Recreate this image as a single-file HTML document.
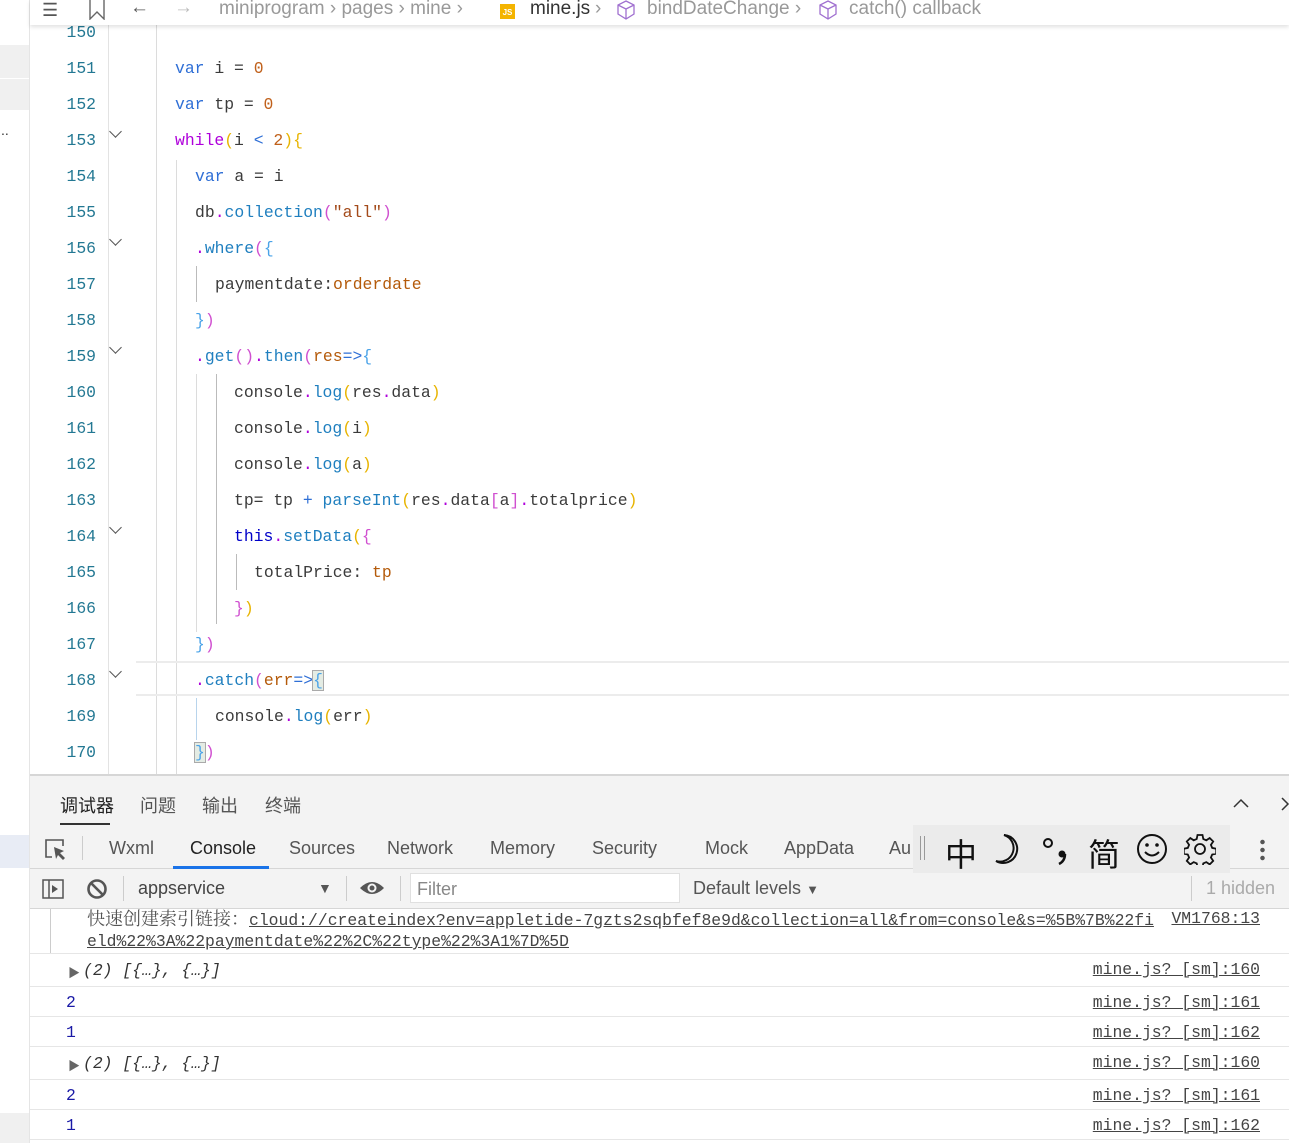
<!DOCTYPE html>
<html><head><meta charset="utf-8"><style>
*{margin:0;padding:0;box-sizing:border-box}
body{width:1289px;height:1143px;overflow:hidden;background:#fff;position:relative;font-family:"Liberation Sans","Noto Sans CJK SC",sans-serif}
.a{position:absolute}
.mono{font-family:"Liberation Mono","Noto Sans CJK SC",monospace;font-size:16.4px}
.ln{position:absolute;left:40px;width:56px;text-align:right;color:#237893;height:36px;line-height:36px}
.cl{position:absolute;height:36px;line-height:36px;white-space:pre;color:#3b3b3b}
.k{color:#2f6fd6}.n{color:#c0601a}.w{color:#af00db}.y{color:#e8b400}.p{color:#d050d0}.b{color:#4aa3e8}.f{color:#1f7fbf}.s{color:#a34a1a}.t{color:#0000c8}.v{color:#b45a0a}
.g{position:absolute;width:1px;background:#dcdcdc}
.fold{position:absolute;left:111px;width:9px;height:9px;border-right:1.5px solid #555;border-bottom:1.5px solid #555;transform:rotate(45deg)}
.tab{position:absolute;font-size:18px;color:#555}
.row{position:absolute;left:30px;right:0}
.src{position:absolute;right:29px;color:#444;text-decoration:underline}
</style></head><body>
<div class="a" style="left:0;top:0;width:30px;height:1143px;background:#fff;border-right:1px solid #e5e5e5"></div>
<div class="a" style="left:0;top:45px;width:29px;height:33px;background:#f0f0f0"></div>
<div class="a" style="left:0;top:79px;width:29px;height:31px;background:#f0f0f0"></div>
<div class="a" style="left:1px;top:122px;font-size:14px;color:#333">..</div>
<div class="a" style="left:0;top:835px;width:29px;height:33px;background:#e8ecf5"></div>
<div class="a" style="left:0;top:1113px;width:29px;height:30px;background:#f0f0f0"></div>

<div class="a" style="left:30px;top:0;width:1259px;height:25px;background:#fff;box-shadow:0 2px 4px rgba(0,0,0,.12);z-index:3;font-size:19px;color:#999;line-height:20px;white-space:nowrap">
 <span class="a" style="left:12px;top:0;color:#555;font-size:18px">☰</span>
 <svg class="a" style="left:58px;top:0" width="18" height="20"><path d="M2 0V19L9 12L16 19V0" fill="none" stroke="#666" stroke-width="1.4"/></svg>
 <span class="a" style="left:100px;top:-2px;color:#555">←</span>
 <span class="a" style="left:144px;top:-2px;color:#bbb">→</span>
 <span class="a" style="left:189px;top:-1px">miniprogram › pages › mine ›</span>
 <span class="a" style="left:470px;top:4px;width:15px;height:15px;background:#f4b400;color:#fff;font-size:8px;line-height:18px;text-align:center;font-weight:bold">JS</span>
 <span class="a" style="left:500px;top:-1px;color:#333">mine.js</span>
 <span class="a" style="left:565px;top:-1px">›</span>
 <svg class="a" style="left:586px;top:0" width="20" height="20"><path d="M10 1L18 5V14L10 19L2 14V5Z M2 5L10 9L18 5 M10 9V19" fill="none" stroke="#a070d0" stroke-width="1.3"/></svg>
 <span class="a" style="left:617px;top:-1px">bindDateChange ›</span>
 <svg class="a" style="left:788px;top:0" width="20" height="20"><path d="M10 1L18 5V14L10 19L2 14V5Z M2 5L10 9L18 5 M10 9V19" fill="none" stroke="#a070d0" stroke-width="1.3"/></svg>
 <span class="a" style="left:819px;top:-1px">catch() callback</span>
</div>

<div class="g" style="left:108px;top:25px;height:750px;background:#e3e3e3"></div>
<div class="g" style="left:156px;top:25px;height:750px"></div>
<div class="g" style="left:176px;top:160px;height:615px"></div>
<div class="g" style="left:196px;top:266px;height:36px;background:#bbb"></div>
<div class="g" style="left:196px;top:374px;height:258px"></div>
<div class="g" style="left:216px;top:374px;height:250px;background:#bbb"></div>
<div class="g" style="left:236px;top:554px;height:36px;background:#bbb"></div>
<div class="g" style="left:196px;top:698px;height:42px;background:#b8d4ec"></div>
<div class="a" style="left:136px;top:661px;width:1153px;height:35px;border-top:2px solid #ececec;border-bottom:2px solid #ececec"></div>

<div class="mono">
<div class="ln" style="top:15px">150</div>
<div class="ln" style="top:51px">151</div><div class="cl" style="left:175px;top:51px"><span class="k">var</span> i = <span class="n">0</span></div>
<div class="ln" style="top:87px">152</div><div class="cl" style="left:175px;top:87px"><span class="k">var</span> tp = <span class="n">0</span></div>
<div class="ln" style="top:123px">153</div><div class="fold" style="top:127px"></div><div class="cl" style="left:175px;top:123px"><span class="w">while</span><span class="y">(</span>i <span class="k">&lt;</span> <span class="n">2</span><span class="y">){</span></div>
<div class="ln" style="top:159px">154</div><div class="cl" style="left:195px;top:159px"><span class="k">var</span> a = i</div>
<div class="ln" style="top:195px">155</div><div class="cl" style="left:195px;top:195px">db<span class="w">.</span><span class="f">collection</span><span class="p">(</span><span class="s">"all"</span><span class="p">)</span></div>
<div class="ln" style="top:231px">156</div><div class="fold" style="top:235px"></div><div class="cl" style="left:195px;top:231px"><span class="w">.</span><span class="f">where</span><span class="p">(</span><span class="b">{</span></div>
<div class="ln" style="top:267px">157</div><div class="cl" style="left:215px;top:267px">paymentdate:<span class="v">orderdate</span></div>
<div class="ln" style="top:303px">158</div><div class="cl" style="left:195px;top:303px"><span class="b">}</span><span class="p">)</span></div>
<div class="ln" style="top:339px">159</div><div class="fold" style="top:343px"></div><div class="cl" style="left:195px;top:339px"><span class="w">.</span><span class="f">get</span><span class="p">()</span><span class="w">.</span><span class="f">then</span><span class="p">(</span><span class="v">res</span><span class="k">=&gt;</span><span class="b">{</span></div>
<div class="ln" style="top:375px">160</div><div class="cl" style="left:234px;top:375px">console<span class="w">.</span><span class="f">log</span><span class="y">(</span>res<span class="w">.</span>data<span class="y">)</span></div>
<div class="ln" style="top:411px">161</div><div class="cl" style="left:234px;top:411px">console<span class="w">.</span><span class="f">log</span><span class="y">(</span>i<span class="y">)</span></div>
<div class="ln" style="top:447px">162</div><div class="cl" style="left:234px;top:447px">console<span class="w">.</span><span class="f">log</span><span class="y">(</span>a<span class="y">)</span></div>
<div class="ln" style="top:483px">163</div><div class="cl" style="left:234px;top:483px">tp= tp <span class="k">+</span> <span class="f">parseInt</span><span class="y">(</span>res<span class="w">.</span>data<span class="p">[</span>a<span class="p">]</span><span class="w">.</span>totalprice<span class="y">)</span></div>
<div class="ln" style="top:519px">164</div><div class="fold" style="top:523px"></div><div class="cl" style="left:234px;top:519px"><span class="t">this</span><span class="w">.</span><span class="f">setData</span><span class="y">(</span><span class="p">{</span></div>
<div class="ln" style="top:555px">165</div><div class="cl" style="left:254px;top:555px">totalPrice: <span class="v">tp</span></div>
<div class="ln" style="top:591px">166</div><div class="cl" style="left:234px;top:591px"><span class="p">}</span><span class="y">)</span></div>
<div class="ln" style="top:627px">167</div><div class="cl" style="left:195px;top:627px"><span class="b">}</span><span class="p">)</span></div>
<div class="ln" style="top:663px">168</div><div class="fold" style="top:667px"></div><div class="cl" style="left:195px;top:663px"><span class="w">.</span><span class="f">catch</span><span class="p">(</span><span class="v">err</span><span class="k">=&gt;</span><span class="b" style="background:#e4ece4;outline:1px solid #aaa">{</span></div>
<div class="ln" style="top:699px">169</div><div class="cl" style="left:215px;top:699px">console<span class="w">.</span><span class="f">log</span><span class="y">(</span>err<span class="y">)</span></div>
<div class="ln" style="top:735px">170</div><div class="cl" style="left:195px;top:735px"><span class="b" style="background:#e4ece4;outline:1px solid #aaa">}</span><span class="p">)</span></div>
</div>

<div class="a" style="left:30px;top:774px;width:1259px;height:135px;background:#f3f3f3;border-top:2px solid #d6d6d6"></div>
<div class="tab" style="left:60px;top:792px;color:#222">调试器</div>
<div class="a" style="left:60px;top:823px;width:50px;height:2px;background:#333"></div>
<div class="tab" style="left:140px;top:792px">问题</div>
<div class="tab" style="left:202px;top:792px">输出</div>
<div class="tab" style="left:265px;top:792px">终端</div>
<svg class="a" style="left:1232px;top:797px" width="18" height="12"><path d="M2 10L9 3L16 10" fill="none" stroke="#333" stroke-width="1.5"/></svg>
<svg class="a" style="left:1280px;top:796px" width="10" height="16"><path d="M2 2L8 8L2 14" fill="none" stroke="#333" stroke-width="1.5"/></svg>

<div class="a" style="left:30px;top:868px;width:1259px;height:1px;background:#d6d6d6"></div>
<svg class="a" style="left:44px;top:838px" width="24" height="24"><path d="M8 19H2V2H19V8" fill="none" stroke="#555" stroke-width="1.6"/><path d="M10 9L20 13L16 15L21 20L19 22L14 17L12 21Z" fill="#555"/></svg>
<div class="a" style="left:82px;top:836px;width:1px;height:24px;background:#ccc"></div>
<div class="tab" style="left:109px;top:838px">Wxml</div>
<div class="tab" style="left:190px;top:838px;color:#222">Console</div>
<div class="a" style="left:173px;top:866px;width:96px;height:3px;background:#1a73e8"></div>
<div class="tab" style="left:289px;top:838px">Sources</div>
<div class="tab" style="left:387px;top:838px">Network</div>
<div class="tab" style="left:490px;top:838px">Memory</div>
<div class="tab" style="left:592px;top:838px">Security</div>
<div class="tab" style="left:705px;top:838px">Mock</div>
<div class="tab" style="left:784px;top:838px">AppData</div>
<div class="tab" style="left:889px;top:838px">Au</div>
<div class="a" style="left:913px;top:825px;width:317px;height:48px;background:#ebebeb"></div>
<div class="a" style="left:920px;top:836px;width:5px;height:24px;border-left:1px solid #999;border-right:1px solid #999"></div>
<div class="a" style="left:945px;top:830px;font-size:32px;color:#111">中</div>
<svg class="a" style="left:992px;top:832px" width="32" height="34"><path d="M12 3A14 14 0 1 1 4 29A13 13 0 0 0 12 3Z" fill="none" stroke="#111" stroke-width="2"/></svg>
<svg class="a" style="left:1040px;top:834px" width="32" height="32"><circle cx="8" cy="9" r="4" fill="none" stroke="#111" stroke-width="2"/><circle cx="22" cy="20" r="3.5" fill="#111"/><path d="M25 20Q25 27 19 30" fill="none" stroke="#111" stroke-width="2.5"/></svg>
<div class="a" style="left:1088px;top:830px;font-size:32px;color:#111">简</div>
<svg class="a" style="left:1135px;top:832px" width="34" height="34"><circle cx="17" cy="17" r="14" fill="none" stroke="#111" stroke-width="2"/><circle cx="12" cy="13" r="1.8" fill="#111"/><circle cx="22" cy="13" r="1.8" fill="#111"/><path d="M10 20Q17 27 24 20" fill="none" stroke="#111" stroke-width="2"/></svg>
<svg class="a" style="left:1184px;top:833px" width="32" height="32" viewBox="0 0 32 32"><g fill="none" stroke="#111" stroke-width="1.8"><path d="M13.5 2h5l.8 4 3 1.3 3.4-2.3 3.5 3.5-2.3 3.4 1.3 3 4 .8v5l-4 .8-1.3 3 2.3 3.4-3.5 3.5-3.4-2.3-3 1.3-.8 4h-5l-.8-4-3-1.3-3.4 2.3-3.5-3.5 2.3-3.4-1.3-3-4-.8v-5l4-.8 1.3-3-2.3-3.4 3.5-3.5 3.4 2.3 3-1.3z"/><circle cx="16" cy="16" r="5"/></g></svg>
<div class="a" style="left:1260px;top:838px;width:5px;height:24px;background:radial-gradient(circle,#555 2px,transparent 2.5px) 0 0/5px 8px repeat-y"></div>

<div class="a" style="left:30px;top:908px;width:1259px;height:1px;background:#d6d6d6"></div>
<svg class="a" style="left:42px;top:879px" width="22" height="20"><rect x="1" y="1" width="20" height="18" fill="none" stroke="#555" stroke-width="1.5"/><path d="M7 1V19" stroke="#555" stroke-width="1.5"/><path d="M10 6L16 10L10 14Z" fill="#555"/></svg>
<svg class="a" style="left:86px;top:878px" width="22" height="22"><circle cx="11" cy="11" r="8.5" fill="none" stroke="#555" stroke-width="2.6"/><path d="M5 5L17 17" stroke="#555" stroke-width="2.6"/></svg>
<div class="a" style="left:123px;top:876px;width:1px;height:25px;background:#ccc"></div>
<div class="tab" style="left:138px;top:878px;color:#444">appservice</div>
<div class="a" style="left:318px;top:880px;font-size:14px;color:#555">▼</div>
<div class="a" style="left:346px;top:876px;width:1px;height:25px;background:#ccc"></div>
<svg class="a" style="left:359px;top:878px" width="26" height="20"><path d="M1 10Q13 -2 25 10Q13 22 1 10Z" fill="#555"/><circle cx="13" cy="10" r="4.5" fill="#f3f3f3"/><circle cx="13" cy="10" r="2.5" fill="#555"/></svg>
<div class="a" style="left:400px;top:876px;width:1px;height:25px;background:#ccc"></div>
<div class="a" style="left:410px;top:873px;width:270px;height:30px;background:#fff;border:1px solid #e0e0e0;font-size:18px;color:#888;padding:5px 6px">Filter</div>
<div class="tab" style="left:693px;top:878px">Default levels <span style="font-size:13px">▼</span></div>
<div class="a" style="left:1191px;top:876px;width:1px;height:25px;background:#ccc"></div>
<div class="tab" style="left:1206px;top:878px;color:#aaa">1 hidden</div>

<div class="mono">
<div class="a" style="left:50px;top:909px;width:1px;height:45px;background:#ccc"></div>
<div class="a" style="left:87px;top:908px;line-height:21px;color:#555;white-space:nowrap"><span style="font-family:'Noto Serif CJK SC',serif;font-size:18px">快速创建索引链接：</span><span style="text-decoration:underline;color:#444">cloud://createindex?env=appletide-7gzts2sqbfef8e9d&amp;collection=all&amp;from=console&amp;s=%5B%7B%22fi</span><br><span style="text-decoration:underline;color:#444">eld%22%3A%22paymentdate%22%2C%22type%22%3A1%7D%5D</span></div>
<div class="src" style="top:908px;line-height:21px">VM1768:13</div>
<div class="row" style="top:953px;height:1px;background:#e6e6e6"></div>
<div class="a" style="left:68px;top:964px;font-size:12px;color:#666">▶</div>
<div class="a" style="left:83px;top:961px;font-style:italic;color:#333">(2) [{…}, {…}]</div>
<div class="src" style="top:960px">mine.js? [sm]:160</div>
<div class="row" style="top:986px;height:1px;background:#e6e6e6"></div>
<div class="a" style="left:66px;top:993px;color:#1a1aa6">2</div>
<div class="src" style="top:993px">mine.js? [sm]:161</div>
<div class="row" style="top:1016px;height:1px;background:#e6e6e6"></div>
<div class="a" style="left:66px;top:1023px;color:#1a1aa6">1</div>
<div class="src" style="top:1023px">mine.js? [sm]:162</div>
<div class="row" style="top:1046px;height:1px;background:#e6e6e6"></div>
<div class="a" style="left:68px;top:1057px;font-size:12px;color:#666">▶</div>
<div class="a" style="left:83px;top:1054px;font-style:italic;color:#333">(2) [{…}, {…}]</div>
<div class="src" style="top:1053px">mine.js? [sm]:160</div>
<div class="row" style="top:1079px;height:1px;background:#e6e6e6"></div>
<div class="a" style="left:66px;top:1086px;color:#1a1aa6">2</div>
<div class="src" style="top:1086px">mine.js? [sm]:161</div>
<div class="row" style="top:1109px;height:1px;background:#e6e6e6"></div>
<div class="a" style="left:66px;top:1116px;color:#1a1aa6">1</div>
<div class="src" style="top:1116px">mine.js? [sm]:162</div>
<div class="row" style="top:1139px;height:1px;background:#e6e6e6"></div>
</div>
</body></html>
